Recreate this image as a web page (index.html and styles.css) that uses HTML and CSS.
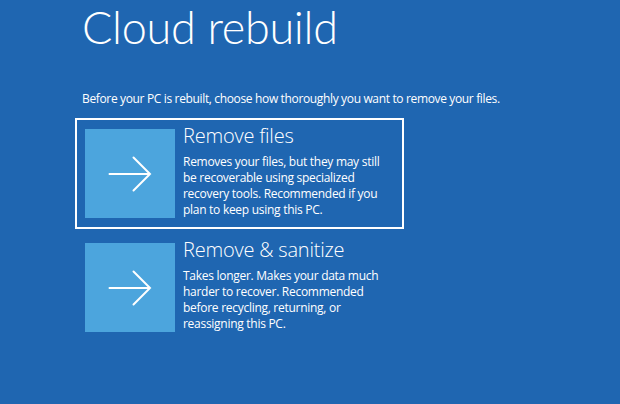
FILE: index.html
```html
<!DOCTYPE html>
<html lang="en">
<head>
<meta charset="utf-8">
<title>Cloud rebuild</title>
<link rel="stylesheet" href="styles.css">
</head>
<body>
<main class="page">
  <h1 class="title">Cloud rebuild</h1>
  <p class="lead">Before your PC is rebuilt, choose how thoroughly you want to remove your files.</p>
  <div class="options">
    <div class="option selected">
      <div class="tile">
        <svg class="arrow" width="44" height="36" viewBox="0 0 44 36" fill="none" stroke="#fff" stroke-width="2" stroke-linecap="round" stroke-linejoin="miter"><path d="M1.5 18H42M25.5 1.5L42 18L25.5 34.5"/></svg>
      </div>
      <div class="text">
        <div class="name">Remove files</div>
        <div class="desc">Removes your files, but they may still be recoverable using specialized recovery tools. Recommended if you plan to keep using this PC.</div>
      </div>
    </div>
    <div class="option">
      <div class="tile">
        <svg class="arrow" width="44" height="36" viewBox="0 0 44 36" fill="none" stroke="#fff" stroke-width="2" stroke-linecap="round" stroke-linejoin="miter"><path d="M1.5 18H42M25.5 1.5L42 18L25.5 34.5"/></svg>
      </div>
      <div class="text">
        <div class="name">Remove &amp; sanitize</div>
        <div class="desc">Takes longer. Makes your data much harder to recover. Recommended before recycling, returning, or reassigning this PC.</div>
      </div>
    </div>
  </div>
</main>
</body>
</html>
```
FILE: styles.css
```css
html, body {
  margin: 0;
  padding: 0;
  background: #1f66b1;
}
body {
  width: 620px;
  height: 404px;
  overflow: hidden;
  color: #ffffff;
  font-family: "Open Sans", "Noto Sans", sans-serif;
}
.page {
  padding: 0 0 0 75px;
}
.title {
  margin: 0;
  padding-left: 7px;
  font-family: "Lato", "Open Sans", sans-serif;
  font-size: 45px;
  font-weight: 300;
  line-height: 54px;
  letter-spacing: -0.3px;
}
.lead {
  margin: 37px 0 0 0;
  padding-left: 7px;
  font-size: 12px;
  line-height: 16px;
  letter-spacing: -0.35px;
}
.options {
  margin-top: 11px;
  display: flex;
  flex-direction: column;
  gap: 3px;
  width: 329px;
}
.option {
  display: flex;
  align-items: flex-start;
  gap: 8px;
  padding: 9px 8px;
  border: 2px solid transparent;
  height: 89px;
}
.option.selected {
  border-color: #ffffff;
}
.tile {
  flex: none;
  width: 90px;
  height: 89px;
  background: #4ca5dd;
  display: flex;
  align-items: center;
  justify-content: center;
}
.text {
  margin-top: -5px;
}
.name {
  font-size: 20px;
  font-weight: 300;
  line-height: 24px;
  letter-spacing: -0.2px;
}
.desc {
  margin-top: 6px;
  font-size: 12px;
  line-height: 16px;
  letter-spacing: -0.28px;
}
```
